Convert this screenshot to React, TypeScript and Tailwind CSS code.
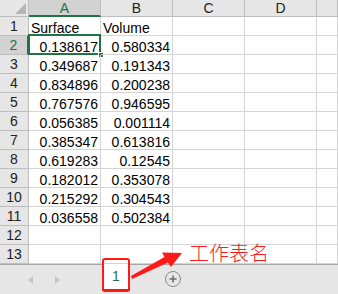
import React from 'react';

const rows: [string, string][] = [
  ['Surface', 'Volume'],
  ['0.138617', '0.580334'],
  ['0.349687', '0.191343'],
  ['0.834896', '0.200238'],
  ['0.767576', '0.946595'],
  ['0.056385', '0.001114'],
  ['0.385347', '0.613816'],
  ['0.619283', '0.12545'],
  ['0.182012', '0.353078'],
  ['0.215292', '0.304543'],
  ['0.036558', '0.502384'],
  ['', ''],
  ['', ''],
];

const cols = ['A', 'B', 'C', 'D', ''];

const App: React.FC = () => {
  return (
    <div
      className="relative w-[338px] h-[294px] overflow-hidden bg-white text-[14px] text-black"
      style={{ fontFamily: '"Liberation Sans", Arial, sans-serif' }}
    >
      <div className="grid grid-cols-[29px_72px_72px_72px_72px_1fr] grid-rows-[17px_repeat(13,19px)]">
        {/* corner */}
        <div className="relative bg-[#e6e6e6] border-r border-b border-[#bdbdbd]">
          <div className="absolute right-[2px] bottom-[2px] w-0 h-0 border-l-[11px] border-l-transparent border-b-[11px] border-b-[#b4b4b4]" />
        </div>
        {cols.map((c, i) => (
          <div
            key={i}
            className={
              i === 0
                ? 'flex items-center justify-center bg-[#d2d2d2] border-r border-[#bdbdbd] border-b-2 border-b-[#217346] text-[#217346] leading-none pt-[1px]'
                : 'flex items-center justify-center bg-[#e6e6e6] border-r border-b border-[#bdbdbd] text-[#222] leading-none'
            }
          >
            {c}
          </div>
        ))}
        {rows.map((r, ri) => (
          <React.Fragment key={ri}>
            <div
              className={
                ri === 1
                  ? 'flex items-center justify-center bg-[#d2d2d2] border-b border-[#bdbdbd] border-r-2 border-r-[#217346] text-[#217346] leading-none'
                  : 'flex items-center justify-center bg-[#e6e6e6] border-r border-b border-[#bdbdbd] text-[#222] leading-none'
              }
            >
              {ri + 1}
            </div>
            {[0, 1, 2, 3, 4].map((ci) => {
              const v = ci < 2 ? r[ci] : '';
              const text = ri === 0;
              return (
                <div
                  key={ci}
                  className={`relative flex items-end border-r border-b border-[#d4d4d4] leading-[14px] ${
                    text ? 'justify-start pl-[2px]' : 'justify-end pr-[2px]'
                  }`}
                >
                  {v}
                  {ri === 1 && ci === 0 && (
                    <>
                      <div className="absolute -left-[1px] -top-[2px] -right-[1px] -bottom-[1px] border-2 border-[#217346]" />
                      <div className="absolute -right-[4px] -bottom-[4px] w-[6px] h-[6px] bg-[#217346] border border-white" />
                    </>
                  )}
                </div>
              );
            })}
          </React.Fragment>
        ))}
      </div>

      {/* sheet tab bar */}
      <div className="h-[30px] bg-[#e6e6e6] border-t border-[#a6a6a6] flex items-start">
        <div className="w-[102px] h-full flex items-center gap-[22px] pl-[28px]">
          <div className="w-0 h-0 border-y-[4px] border-y-transparent border-r-[5px] border-r-[#c4c4c4]" />
          <div className="w-0 h-0 border-y-[4px] border-y-transparent border-l-[5px] border-l-[#c4c4c4]" />
        </div>
        <div className="-mt-[1px] w-[28px] h-[27px] bg-white border-b-2 border-[#217346] flex items-center justify-center text-[14px] text-[#217346]">
          1
        </div>
        <div className="ml-[35px] mt-[6px] w-[16px] h-[16px] rounded-full border border-[#8a8a8a] flex items-center justify-center">
          <svg width="10" height="10" viewBox="0 0 10 10">
            <path d="M5 1.5v7M1.5 5h7" stroke="#6e6e6e" strokeWidth="1.6" />
          </svg>
        </div>
      </div>

      {/* annotation */}
      <div className="absolute left-[102px] top-[258px] w-[28px] h-[34px] border-2 border-[#ff1a1a] rounded-[3px]" />
      <svg className="absolute left-0 top-0 pointer-events-none" width="338" height="294">
        <polygon
          points="131,276 164.5,257 162,252.5 182,253 171,267 168,262.5 132,279"
          fill="#ff1a1a"
        />
      </svg>
      <div
        className="absolute left-[189px] top-[241px] text-[20px] leading-[24px] text-[#ff1a1a] font-light"
        style={{ fontFamily: '"Noto Sans CJK SC", sans-serif' }}
      >
        工作表名
      </div>
    </div>
  );
};

export default App;
